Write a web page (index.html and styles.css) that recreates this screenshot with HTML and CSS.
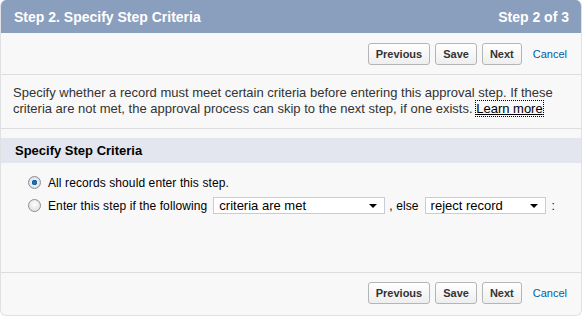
FILE: index.html
```html
<!DOCTYPE html>
<html lang="en">
<head>
  <meta charset="UTF-8" />
  <title>Step 2. Specify Step Criteria</title>
  <link rel="stylesheet" href="styles.css">
</head>
<body>
  <div class="wizard">
    <div class="header">
      <h1>Step 2. Specify Step Criteria</h1>
      <div class="step-count">Step 2 of 3</div>
    </div>

    <div class="button-bar">
      <button class="btn">Previous</button>
      <button class="btn">Save</button>
      <button class="btn">Next</button>
      <a class="cancel" href="#">Cancel</a>
    </div>

    <div class="description">
      Specify whether a record must meet certain criteria before entering this approval step. If these<br>
      criteria are not met, the approval process can skip to the next step, if one exists.
      <a class="learn-more" href="#">Learn more</a>
    </div>

    <div class="section-title">Specify Step Criteria</div>

    <div class="criteria">
      <label class="option">
        <input type="radio" name="criteria" checked>
        <span>All records should enter this step.</span>
      </label>
      <label class="option">
        <input type="radio" name="criteria">
        <span>Enter this step if the following</span>
        <span class="select-wrap wide">
          <select><option>criteria are met</option></select>
        </span>
        <span class="else">, else</span>
        <span class="select-wrap narrow">
          <select><option>reject record</option></select>
        </span>
        <span class="colon">:</span>
      </label>
    </div>

    <div class="button-bar bottom">
      <button class="btn">Previous</button>
      <button class="btn">Save</button>
      <button class="btn">Next</button>
      <a class="cancel" href="#">Cancel</a>
    </div>
  </div>
</body>
</html>
```

FILE: styles.css
```css
body {
  margin: 0;
  font-family: "Liberation Sans", Arial, sans-serif;
  background: #ffffff;
}

.wizard {
  width: 582px;
  height: 316px;
  box-sizing: border-box;
  border: 1px solid #dfe1e3;
  border-top: none;
  border-radius: 6px;
  background: #f8f8f8;
  overflow: hidden;
  display: flex;
  flex-direction: column;
}

.header {
  height: 33px;
  flex: none;
  background: #8a9ebe;
  display: flex;
  justify-content: space-between;
  align-items: center;
  padding: 0 12px 0 13px;
  color: #ffffff;
  font-weight: bold;
  font-size: 14px;
}

.header h1 {
  margin: 0;
  font-size: 14px;
}

.button-bar {
  height: 41px;
  flex: none;
  display: flex;
  justify-content: flex-end;
  align-items: center;
  gap: 5px;
  padding: 0 14px 0 0;
  border-bottom: 1px solid #dddddd;
}

.button-bar.bottom {
  border-bottom: none;
  border-top: 1px solid #dddddd;
  height: 43px;
  box-sizing: border-box;
  padding-bottom: 3px;
}

.btn {
  height: 22px;
  margin: 0;
  padding: 0 7px;
  font-family: "Liberation Sans", Arial, sans-serif;
  font-size: 11px;
  font-weight: bold;
  color: #333333;
  background: linear-gradient(#ffffff, #eeeeee);
  border: 1px solid #b5b5b5;
  border-radius: 3px;
}

.cancel {
  margin-left: 6px;
  font-size: 11px;
  color: #015ba7;
  text-decoration: none;
}

.description {
  flex: none;
  padding: 10px 12px 11px 12px;
  font-size: 13px;
  line-height: 16px;
  color: #333333;
  border-bottom: 1px solid #dddddd;
}

.learn-more {
  color: #000000;
  outline: 1px dotted #000000;
}

.section-title {
  flex: none;
  margin-top: 9px;
  height: 25px;
  line-height: 25px;
  padding-left: 14px;
  background: #e3e6ee;
  font-size: 13px;
  font-weight: bold;
  color: #000000;
}

.criteria {
  flex: 1;
  padding: 8px 0 0 27px;
}

.option {
  display: flex;
  align-items: center;
  height: 23px;
  font-size: 12px;
  letter-spacing: 0.1px;
  color: #000000;
}

.option input {
  appearance: none;
  width: 13px;
  height: 13px;
  margin: 0 7px 0 0;
  border: 1px solid #8a8f96;
  border-radius: 50%;
  background: radial-gradient(circle at 50% 40%, #ffffff, #d6d8db);
  box-sizing: border-box;
}

.option input:checked {
  background: radial-gradient(circle, #1a7fd1 0, #0f5e9e 2.5px, #eef1f4 3px, #c8ccd1 100%);
}

.select-wrap {
  position: relative;
  display: inline-block;
  margin-left: 6px;
}

.select-wrap select {
  appearance: none;
  height: 17px;
  padding: 0 0 0 5px;
  border: 1px solid #c9ccd4;
  background: #ffffff;
  font-family: "Liberation Sans", Arial, sans-serif;
  font-size: 13px;
  color: #000000;
  border-radius: 0;
}

.select-wrap.wide select {
  width: 172px;
}

.select-wrap.narrow select {
  width: 121px;
}

.select-wrap::after {
  content: "";
  position: absolute;
  right: 8px;
  top: 7px;
  border-left: 4px solid transparent;
  border-right: 4px solid transparent;
  border-top: 4px solid #000000;
}

.else {
  margin-left: 4px;
}

.colon {
  margin-left: 6px;
}
```
